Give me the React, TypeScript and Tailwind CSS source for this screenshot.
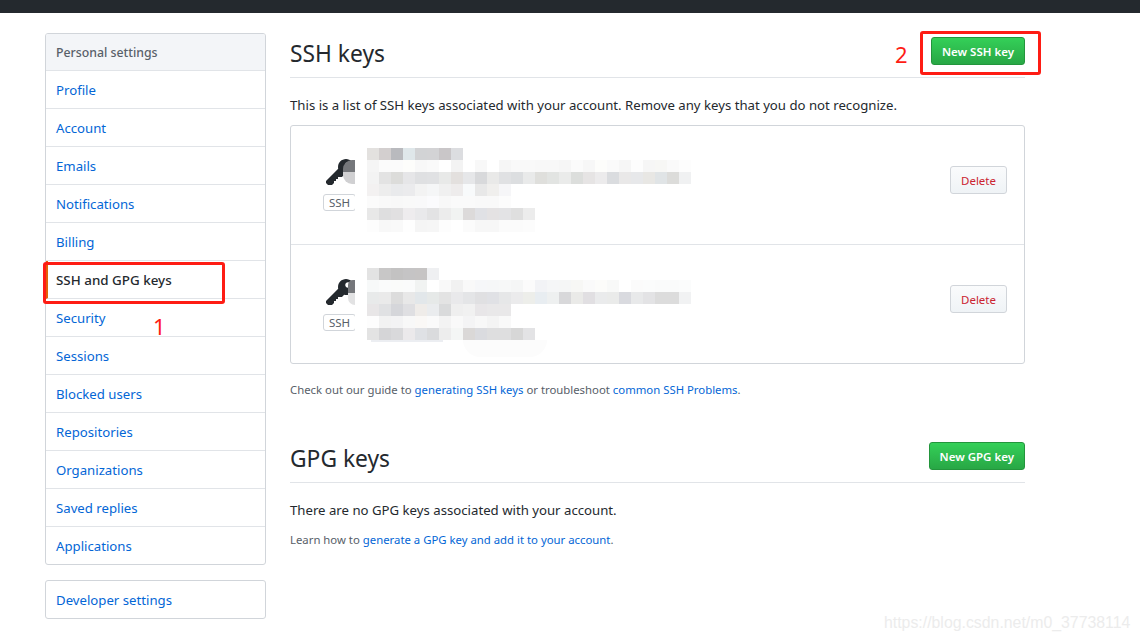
import React from 'react';

const font = "font-['Noto_Sans','Open_Sans',sans-serif]";

const navItems = [
  'Profile',
  'Account',
  'Emails',
  'Notifications',
  'Billing',
  'SSH and GPG keys',
  'Security',
  'Sessions',
  'Blocked users',
  'Repositories',
  'Organizations',
  'Saved replies',
  'Applications',
];

const mosaicOne = [
  ['#e3e1df', '#d3cfcf', '#b9babe', '#dfe7ea', '#d2d3d5', '#d3d3d5', '#c9c6c8', '#dcdde0'],
  ['#f5f5f5', '#fbfbfb', '#fbfbfb', '#fdfdfb', '#f8f8f8', '#fafafa', '#ffffff', '#f3f3f3', '#ffffff', '#f8f8f8', '#ffffff', '#f6f6f6', '#f9f9f9', '#f9f9f9', '#f8f8f8', '#f8f8f8', '#f6f6f6', '#fbfbfb', '#f7f7f7', '#fdfdfb', '#fafafa', '#f6f6f6', '#fdfdfd', '#f6f6f6', '#f7f7f5', '#fafafa', '#fdfdfd'],
  ['#f3f3f3', '#e3e3e3', '#dcdcda', '#e6e6e8', '#dfe0e2', '#e0e1e3', '#e8e9e8', '#e3e0de', '#e6e7e9', '#d8d9db', '#e9e9e8', '#e0e1e3', '#dcdee0', '#e9eaea', '#dfdfdc', '#e2e4e2', '#eaebea', '#dcdedc', '#e6e4e4', '#ecebec', '#dadcdf', '#e9e8e8', '#e7e8ea', '#e8e7e4', '#e0e4e6', '#dcdcda', '#f0f1f2'],
  ['#f3f1f1', '#ededed', '#e9eaec', '#ebebed', '#f3f3f3', '#f5f6f7', '#f0f0f0', '#eeecec', '#f8fafb', '#e8e8e8', '#f0efed', '#f6f6f8'],
  ['#fbfbfb', '#f9f9f9', '#f8f8f8', '#f9f9f9', '#f9f9fa', '#fbfbfd', '#f8f8f8', '#fafafa', '#fafafa', '#f9f9f9', '#f9f9f9', '#fcfcfc'],
  ['#e8e8e8', '#dededf', '#e1e0e1', '#eeecee', '#e9e9eb', '#e3e3e4', '#ececec', '#f1f3f2', '#dcdada', '#e0e1e5', '#e4e2e3', '#e3e3e5', '#dfdfdf', '#ececec'],
  ['#fdfdfd', '#f8f8f8', '#f9f9f9', '#fefefe', '#f5f5f5', '#f6f6f6', '#fdfdfd', '#ffffff', '#fbfbfb', '#f7f7f7', '#f7f7f7', '#fbfbfb', '#fbfbfb', '#fcfcfc'],
];

const mosaicTwo = [
  ['#e3e3e3', '#c8c7c7', '#c3c2c2', '#c5c4c5', '#c6c4c4', '#eff0f2'],
  ['#f7f9f9', '#fafbfb', '#fafbfa', '#fafbfb', '#f1f3f2', '#ffffff', '#f9f9f9', '#f1f1f1', '#f9f9f9', '#f6f7f9', '#f6f7f8', '#f7f8f8', '#f5f6f6', '#fbfbfb', '#f2f3f6', '#f5f6f7', '#f5f6f6', '#f7f7f5', '#fafafa', '#fcfcfa', '#f8f9f8', '#ffffff', '#fbfbfb', '#fbfcfc', '#fafbfb', '#fafbfb', '#fbfcfc'],
  ['#e8eaea', '#eaeaea', '#dcdcdc', '#e8e8e8', '#e2e7ea', '#e6e9e8', '#e3e3e3', '#e9e9eb', '#e4e5e7', '#e0e0e2', '#e0e1e5', '#e6e7e8', '#ebebec', '#edeeea', '#e8edf1', '#eef0f0', '#d8d8da', '#eaeae8', '#e1dfe2', '#eaebec', '#eaebea', '#d9dadf', '#e8e9ea', '#e3e3e5', '#dcdcdc', '#dcdcdc', '#f1f2f3'],
  ['#e8e6e7', '#e0e1e3', '#d5d6da', '#dfdfe2', '#efece9', '#eaecee', '#d9dadb', '#efefef', '#f1f1f1', '#e8e6e8', '#e9e8e9', '#e9e8e9'],
  ['#fdfdfd', '#f2f2f2', '#f3f3f4', '#f8f8f8', '#faf8f6', '#fafafa', '#f3f3f3', '#f9f9f9', '#f4f4f5', '#f8f8f8', '#f4f4f4', '#f9f9f9'],
  ['#e3e3e3', '#d5d5d7', '#d9d9db', '#ebe9eb', '#dfe1e5', '#dadbdd', '#ededed', '#f4f6f5', '#dad8d7', '#dadbdf', '#dededf', '#dededf', '#d7d7d7', '#e3e3e5'],
];

const KeyIcon = () => (
  <svg viewBox="0 0 14 16" width="28" height="32" fill="#24292e">
    <path
      fillRule="evenodd"
      d="M12.83 2.17C12.08 1.42 11.14 1.03 10 1c-1.13.03-2.08.42-2.83 1.17S6.04 3.86 6.01 5c0 .3.03.59.09.89L0 12v1l1 1h2l1-1v-1h1v-1h1v-1h2l1.09-1.11c.3.08.59.11.91.11 1.14-.03 2.08-.42 2.83-1.17S13.97 6.14 14 5c-.03-1.14-.42-2.08-1.17-2.83zM11 5.38c-.77 0-1.38-.61-1.38-1.38 0-.77.61-1.38 1.38-1.38.77 0 1.38.61 1.38 1.38 0 .77-.61 1.38-1.38 1.38z"
    />
  </svg>
);

const Mosaic = ({ rows }: { rows: string[][] }) => (
  <div className="flex flex-col">
    {rows.map((row, i) => (
      <div key={i} className="flex h-3">
        {row.map((c, j) => (
          <div key={j} className="w-3 h-3" style={{ backgroundColor: c }} />
        ))}
      </div>
    ))}
  </div>
);

const GreenButton = ({ label }: { label: string }) => (
  <button className="h-7 px-[10px] pt-px rounded-[3px] border border-[#23953c] bg-gradient-to-b from-[#34d058] to-[#28a745] text-white text-[11.5px] font-semibold leading-none">
    {label}
  </button>
);

type KeyRowProps = {
  rows: string[][];
  second?: boolean;
};

const KeyRow = ({ rows, second }: KeyRowProps) => (
  <div className={`relative flex items-start justify-between pl-8 pr-[17px] ${second ? 'h-[119px] border-t border-[#e1e4e8]' : 'h-[118px]'}`}>
    <div className={`flex flex-col items-center gap-[5px] ${second ? 'pt-[32px]' : 'pt-[31px]'}`}>
      <KeyIcon />
      <span className="h-[17px] w-[33px] text-center border border-[#d1d5da] rounded-[3px] text-[11.5px] leading-[15px] text-[#586069]">SSH</span>
    </div>
    <div className="absolute left-[64px] top-[8px] w-[16px] h-[104px] bg-white rounded-l-[14px]" />
    {second ? (
      <div className="absolute left-[57px] top-[35px] w-[7px] flex flex-col">
        <div className="h-[13px] bg-[#75777b] rounded-tl-[5px]" />
        <div className="h-3 bg-[#e2e2e3] rounded-bl-[7px]" />
      </div>
    ) : (
      <div className="absolute left-[52px] top-[34px] w-3 flex flex-col">
        <div className="h-3 bg-[#75777b] rounded-tl-[9px]" />
        <div className="h-3 bg-[#d0d0d2] rounded-bl-[9px]" />
      </div>
    )}
    <div className={`absolute left-[76px] ${second ? 'top-[23px]' : 'top-[22px]'}`}>
      <Mosaic rows={rows} />
      {second && (
        <div className="ml-1 w-[72px] h-[2px] bg-[#eceef2]" />
      )}
    </div>
    {second && (
      <div className="absolute left-[172px] top-[95px] w-[84px] h-[17px] bg-[#fcfcfc] rounded-b-[40px]" />
    )}
    <button className="mt-10 h-7 w-[57px] pt-px rounded-[3px] border border-[#d1d5da] bg-gradient-to-b from-[#fafbfc] to-[#eff3f6] text-[#cb2431] text-[11.5px] leading-none">
      Delete
    </button>
  </div>
);

export default function App() {
  return (
    <div className={`relative min-h-[641px] bg-white text-[13.2px] text-[#24292e] overflow-hidden ${font}`}>
      <div className="h-[13px] bg-[#24292e]" />

      <div className="flex pt-5 pl-[45px] gap-6">
        <aside className="w-[221px] shrink-0">
          <div className="border border-[#d1d5da] rounded-[3px] overflow-hidden">
            <div className="h-[37px] flex items-center px-[10px] pt-[2px] bg-[#f3f5f8] border-b border-[#e1e4e8] text-[12.3px] font-medium text-[#586069]">
              Personal settings
            </div>
            {navItems.map((item, i) => {
              const active = item === 'SSH and GPG keys';
              const last = i === navItems.length - 1;
              return (
                <div
                  key={item}
                  className={`flex items-center px-[10px] pt-[2px] ${last ? 'h-[37px]' : 'h-[38px] border-b border-[#e1e4e8]'} ${active ? 'text-[13.4px] text-[#24292e] font-medium border-l-[2px] border-l-[#e36209] pl-[8px]' : 'text-[#0366d6]'}`}
                >
                  {item}
                </div>
              );
            })}
          </div>
          <div className="mt-[15px] h-[39px] flex items-center px-[10px] pt-[2px] border border-[#d1d5da] rounded-[3px] text-[#0366d6]">
            Developer settings
          </div>
        </aside>

        <main className="w-[735px]">
          <div className="h-[45px] flex items-start justify-between border-b border-[#e1e4e8]">
            <h2 className="text-[22.8px] leading-[42px] font-normal">SSH keys</h2>
            <div className="mt-1">
              <GreenButton label="New SSH key" />
            </div>
          </div>

          <p className="mt-[17px] leading-[21px]">
            This is a list of SSH keys associated with your account. Remove any keys that you do not recognize.
          </p>

          <div className="mt-[9px] border border-[#d1d5da] rounded-[3px]">
            <KeyRow rows={mosaicOne} />
            <KeyRow rows={mosaicTwo} second />
          </div>

          <p className="mt-[17px] text-[11.35px] leading-[18px] text-[#586069]">
            Check out our guide to <span className="text-[#0366d6]">generating SSH keys</span> or troubleshoot{' '}
            <span className="text-[#0366d6]">common SSH Problems</span>.
          </p>

          <div className="mt-[43px] h-[41px] flex items-start justify-between border-b border-[#e1e4e8]">
            <h2 className="text-[22.8px] leading-[33px] font-normal">GPG keys</h2>
            <GreenButton label="New GPG key" />
          </div>

          <p className="mt-[17px] leading-[21px]">There are no GPG keys associated with your account.</p>
          <p className="mt-[10px] text-[11.35px] leading-[18px] text-[#586069]">
            Learn how to <span className="text-[#0366d6]">generate a GPG key and add it to your account</span>.
          </p>
        </main>
      </div>

      <div className="absolute left-[43px] top-[262px] w-[182px] h-[42px] border-[3px] border-[#fe1c14] rounded-[3px]" />
      <div className="absolute left-[920px] top-[31px] w-[121px] h-[44px] border-[3px] border-[#fe1c14] rounded-[3px]" />
      <span className="absolute left-[153px] top-[312px] text-[22px] leading-7 text-[#fe1c14]">1</span>
      <span className="absolute left-[895px] top-[40px] text-[22px] leading-7 text-[#fe1c14]">2</span>
      <span className="absolute left-[884px] top-[611px] text-[15.85px] leading-6 text-[#ececec] font-['Liberation_Sans',sans-serif]">
        https://blog.csdn.net/m0_37738114
      </span>
    </div>
  );
}
